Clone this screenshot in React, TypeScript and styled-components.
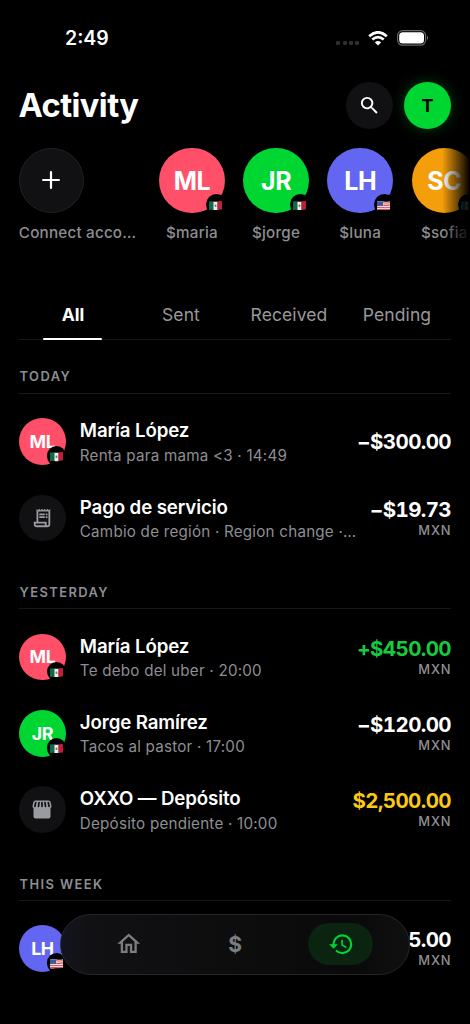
import React from "react";
import styled, { createGlobalStyle, css } from "styled-components";
import { MdSearch, MdOutlineReceiptLong, MdOutlineHome, MdHistory } from "react-icons/md";

const GlobalStyle = createGlobalStyle`
  *, *::before, *::after { box-sizing: border-box; }
  html, body { margin: 0; background: #000; }
  body { font-family: Inter, "Liberation Sans", sans-serif; color: #fff; overflow: hidden; }
`;

const Screen = styled.main`
  position: relative;
  width: 470px;
  height: 1024px;
  overflow: hidden;
  background: #000;
  display: flex;
  flex-direction: column;
`;

const StatusBar = styled.div`
  display: flex;
  justify-content: space-between;
  align-items: center;
  height: 76px;
  padding: 0 41px 0 65px;
`;

const Time = styled.span`
  font-size: 19.5px;
  font-weight: 600;
  line-height: 24px;
`;

const StatusIcons = styled.div`
  display: flex;
  align-items: center;
  gap: 9px;
`;

const SignalDots = styled.div`
  display: flex;
  gap: 2.2px;
  padding-top: 10px;
  span { width: 4px; height: 4px; border-radius: 1.2px; background: #303030; }
`;

const Header = styled.header`
  display: flex;
  align-items: center;
  height: 58.6px;
  padding: 0 19px;
  gap: 11.5px;
`;

const Title = styled.h1`
  flex: 1;
  margin: -1px 0 0 -0.6px;
  font-size: 32.7px;
  line-height: 40px;
  font-weight: 700;
  letter-spacing: -0.57px;
`;

const RoundButton = styled.button<{ $accent?: boolean }>`
  width: 46.8px;
  height: 46.8px;
  border: 0;
  padding: 0;
  border-radius: 50%;
  display: grid;
  place-items: center;
  color: #fff;
  background: #111113;
  font: 700 18px/22px Inter, sans-serif;
  ${(p) => p.$accent && css`
    padding-top: 1px;
    color: #000;
    background: #00d632;
    box-shadow: 0 0 14px rgba(0, 214, 50, 0.3);
  `}
`;

const Contacts = styled.section`
  position: relative;
  display: flex;
  height: 109.4px;
  padding: 13px 0 0 18.8px;
  overflow: hidden;
  &::after {
    content: "";
    position: absolute;
    inset: 0 0 0 auto;
    width: 28px;
    background: linear-gradient(90deg, transparent, #000);
  }
`;

const Contact = styled.div<{ $wide?: boolean }>`
  flex: none;
  width: ${(p) => (p.$wide ? "121px" : "66px")};
  margin-right: ${(p) => (p.$wide ? "19.2px" : "18.1px")};
  display: flex;
  flex-direction: column;
  align-items: ${(p) => (p.$wide ? "flex-start" : "center")};
`;

const ContactName = styled.span`
  margin-top: 10.2px;
  font-size: 15.2px;
  line-height: 20px;
  font-weight: 500;
  letter-spacing: 0.22px;
  color: #8e8e93;
  white-space: nowrap;
`;

const AddCircle = styled.div`
  width: 65.4px;
  height: 65.4px;
  border-radius: 50%;
  border: 1px solid #222224;
  background: #111113;
  display: grid;
  place-items: center;
`;

const AvatarCircle = styled.div<{ $size: number; $color: string }>`
  position: relative;
  flex: none;
  width: ${(p) => p.$size}px;
  height: ${(p) => p.$size}px;
  border-radius: 50%;
  display: grid;
  place-items: center;
  padding-top: ${(p) => (p.$size > 50 ? 1 : 0)}px;
  background: ${(p) => p.$color};
  color: ${(p) => (p.$color === "#111113" ? "#9a9aa2" : "#fff")};
  font-weight: 700;
  font-size: ${(p) => (p.$size > 50 ? 25 : 17.8)}px;
  letter-spacing: -0.4px;
`;

const FlagBadge = styled.span<{ $large: boolean }>`
  position: absolute;
  right: ${(p) => (p.$large ? -2.5 : -0.6)}px;
  bottom: ${(p) => (p.$large ? -2.5 : -1)}px;
  width: ${(p) => (p.$large ? 21.5 : 19.8)}px;
  height: ${(p) => (p.$large ? 21.5 : 19.8)}px;
  padding: 2px ${(p) => (p.$large ? 2 : 0)}px 0 0;
  border-radius: 50%;
  background: #000;
  display: grid;
  place-items: center;
`;

const Tabs = styled.nav`
  display: grid;
  grid-template-columns: repeat(4, 1fr);
  height: 51px;
  margin: 45px 19px 0;
  border-bottom: 1px solid #171718;
`;

const Tab = styled.span<{ $active?: boolean }>`
  position: relative;
  text-align: center;
  font-size: 17.5px;
  line-height: 51.5px;
  font-weight: ${(p) => (p.$active ? 700 : 400)};
  letter-spacing: ${(p) => (p.$active ? -0.1 : 0.1)}px;
  color: ${(p) => (p.$active ? "#fff" : "#98989d")};
  ${(p) => p.$active && css`
    &::after {
      content: "";
      position: absolute;
      left: 24px;
      right: 24.8px;
      bottom: 0;
      height: 2.6px;
      border-radius: 2px;
      background: #fff;
    }
  `}
`;

const Section = styled.section`
  padding: 25.5px 19px 0;
  & + & { padding-top: 24.8px; }
`;

const SectionTitle = styled.h2`
  margin: 0 0 9.8px;
  padding: 0 0 0 0.6px;
  height: 28.2px;
  font-size: 12.9px;
  line-height: 23px;
  font-weight: 600;
  letter-spacing: 1.42px;
  color: #8e8e93;
  border-bottom: 1px solid #171718;
`;

const Row = styled.div`
  display: flex;
  align-items: center;
  height: 76.3px;
  gap: 14px;
`;

const Details = styled.div`
  flex: 1;
  min-width: 0;
  padding-top: 2.8px;
  display: flex;
  flex-direction: column;
`;

const Name = styled.span`
  font-size: 18.7px;
  line-height: 24px;
  font-weight: 600;
  letter-spacing: -0.12px;
`;

const Note = styled.span`
  margin-top: 1.4px;
  font-size: 15.2px;
  line-height: 22px;
  letter-spacing: 0.22px;
  color: #8e8e93;
  white-space: nowrap;
`;

const AmountBox = styled.div`
  display: flex;
  flex-direction: column;
  align-items: flex-end;
  padding-top: 0.6px;
`;

const Amount = styled.span<{ $color?: string }>`
  font-size: 20.5px;
  line-height: 24px;
  font-weight: 700;
  font-variant-numeric: tabular-nums;
  letter-spacing: -0.6px;
  color: ${(p) => p.$color ?? "#fff"};
`;

const Currency = styled.span`
  font-size: 12.9px;
  line-height: 17px;
  font-weight: 500;
  letter-spacing: 0.9px;
  margin-right: -0.5px;
  color: #8e8e93;
`;

const BottomBar = styled.nav`
  position: absolute;
  left: 59.5px;
  top: 913.6px;
  width: 350.5px;
  height: 61px;
  border-radius: 31px;
  border: 1px solid #262628;
  padding: 0 15px 1px;
  display: grid;
  grid-template-columns: repeat(3, 1fr);
  align-items: center;
  justify-items: center;
  background: linear-gradient(90deg, #14141f 0, #111114 28px, #0d0d0e 50%, #0a0a0b 85%, #101011 100%);
`;

const BarItem = styled.span<{ $active?: boolean }>`
  width: 65px;
  height: 42px;
  padding: 1px 0 0 0.6px;
  border-radius: 21px;
  display: grid;
  place-items: center;
  font-size: 21px;
  font-weight: 700;
  color: ${(p) => (p.$active ? "#00d632" : "#7d7d7f")};
  background: ${(p) => (p.$active ? "#0a2411" : "transparent")};
`;

type Country = "mx" | "us";

const Flag = ({ country }: { country: Country }) =>
  country === "mx" ? (
    <svg width="13" height="9.4" viewBox="0 0 13 9.4">
      <path d="M0 .6Q2.2-.2 4.4.4V9Q2.2 8.600 0 9.400z" fill="#0b6b4b" />
      <path d="M4.400.400Q6.500 1 8.600.500V9Q6.500 9.500 4.400 9z" fill="#eee" />
      <path d="M8.600.500Q11-.2 13 .2V8.600Q11 8.300 8.600 9z" fill="#c01f3c" />
      <ellipse cx="6.500" cy="4.700" rx="1" ry="1.300" fill="#8a765a" />
    </svg>
  ) : (
    <svg width="13" height="9.4" viewBox="0 0 13 9.4">
      <path d="M0 .6Q3-.3 6.500.500T13 .2V8.700Q10 8.300 6.500 9T0 9.200z" fill="#eee" />
      <path d="M0 2Q3 1.200 6.500 1.800T13 1.500M0 4.400Q3 3.700 6.500 4.200T13 3.900M0 6.600Q3 6 6.500 6.500T13 6.200M0 8.700Q3 8.200 6.500 8.600T13 8.300" fill="none" stroke="#dc4a56" strokeWidth="1.100" />
      <path d="M0 .6Q3-.2 6 .4V5Q3 4.500 0 5.200z" fill="#3b5a9d" />
    </svg>
  );

const StoreIcon = () => (
  <svg width="20" height="19" viewBox="0 0 20 19">
    <path d="M3.200.5H16.800Q18.300.5 18.600 2L19.500 6Q19.700 7.600 18.500 8.300V16.500Q18.500 18.500 16.500 18.500H3.500Q1.500 18.500 1.500 16.500V8.300Q.3 7.600.5 6L1.400 2Q1.700.5 3.200.5Z" fill="currentColor" />
    <path d="M3.700 2.500L2.900 6.300M7 2.500L6.500 6.300M10 2.500V6.300M13 2.500L13.500 6.300M16.300 2.500L17.100 6.300" stroke="#111113" strokeWidth="1.700" strokeLinecap="round" />
  </svg>
);

const Avatar = ({ text, color, country, size = 46.8 }: { text: React.ReactNode; color: string; country?: Country; size?: number }) => (
  <AvatarCircle $size={size} $color={color}>
    {text}
    {country && (
      <FlagBadge $large={size > 50}>
        <Flag country={country} />
      </FlagBadge>
    )}
  </AvatarCircle>
);

type Item = {
  avatar: React.ReactNode;
  color: string;
  country?: Country;
  name: string;
  note: string;
  amount: string;
  tone?: string;
  currency?: string;
};

const PINK = "#ff4f69";
const GREEN = "#00d632";
const INDIGO = "#6366f1";
const ORANGE = "#f59e0b";
const NEUTRAL = "#111113";

const contacts: { initials: string; color: string; country: Country; handle: string }[] = [
  { initials: "ML", color: PINK, country: "mx", handle: "$maria" },
  { initials: "JR", color: GREEN, country: "mx", handle: "$jorge" },
  { initials: "LH", color: INDIGO, country: "us", handle: "$luna" },
  { initials: "SC", color: ORANGE, country: "mx", handle: "$sofia" },
];

const groups: { title: string; items: Item[] }[] = [
  {
    title: "TODAY",
    items: [
      { avatar: "ML", color: PINK, country: "mx", name: "María López", note: "Renta para mama <3 · 14:49", amount: "−$300.00" },
      { avatar: <MdOutlineReceiptLong size={22} />, color: NEUTRAL, name: "Pago de servicio", note: "Cambio de región · Region change ·…", amount: "−$19.73", currency: "MXN" },
    ],
  },
  {
    title: "YESTERDAY",
    items: [
      { avatar: "ML", color: PINK, country: "mx", name: "María López", note: "Te debo del uber · 20:00", amount: "+$450.00", tone: "#16cb40", currency: "MXN" },
      { avatar: "JR", color: GREEN, country: "mx", name: "Jorge Ramírez", note: "Tacos al pastor · 17:00", amount: "−$120.00", currency: "MXN" },
      { avatar: <StoreIcon />, color: NEUTRAL, name: "OXXO — Depósito", note: "Depósito pendiente · 10:00", amount: "$2,500.00", tone: "#fbc915", currency: "MXN" },
    ],
  },
  {
    title: "THIS WEEK",
    items: [{ avatar: "LH", color: INDIGO, country: "us", name: "", note: "", amount: "5.00", currency: "MXN" }],
  },
];

export default function App() {
  return (
    <Screen>
      <GlobalStyle />
      <StatusBar>
        <Time>2:49</Time>
        <StatusIcons>
          <SignalDots><span /><span /><span /><span /></SignalDots>
          <svg width="20" height="15" viewBox="0 0 20 15" fill="none" stroke="#fff" strokeWidth="2.700">
            <path d="M1.200 5.200Q10-2.600 18.800 5.200M4.300 8.600Q10 3.700 15.700 8.600" />
            <path d="M10 14.600L6.900 11.400Q10 8.700 13.100 11.400Z" fill="#fff" stroke="none" />
          </svg>
          <svg width="32" height="16" viewBox="0 0 32 16">
            <rect x=".6" y=".6" width="28" height="14.600" rx="5" fill="none" stroke="#666" strokeWidth="1.200" />
            <rect x="2.200" y="2.200" width="24.800" height="11.400" rx="3.600" fill="#fff" />
            <path d="M30 5.500Q32 7.900 30 10.300Z" fill="#777" />
          </svg>
        </StatusIcons>
      </StatusBar>
      <Header>
        <Title>Activity</Title>
        <RoundButton aria-label="Search"><MdSearch size={23} /></RoundButton>
        <RoundButton $accent>T</RoundButton>
      </Header>
      <Contacts>
        <Contact $wide>
          <AddCircle>
            <svg width="18" height="18" viewBox="0 0 18 18" stroke="#fff" strokeWidth="2.200" strokeLinecap="round">
              <path d="M9 1.100V16.900M1.100 9H16.900" />
            </svg>
          </AddCircle>
          <ContactName>Connect acco…</ContactName>
        </Contact>
        {contacts.map((c) => (
          <Contact key={c.handle}>
            <Avatar text={c.initials} color={c.color} country={c.country} size={65.4} />
            <ContactName>{c.handle}</ContactName>
          </Contact>
        ))}
      </Contacts>
      <Tabs>
        <Tab $active>All</Tab>
        <Tab>Sent</Tab>
        <Tab>Received</Tab>
        <Tab>Pending</Tab>
      </Tabs>
      {groups.map((g) => (
        <Section key={g.title}>
          <SectionTitle>{g.title}</SectionTitle>
          {g.items.map((item, i) => (
            <Row key={i}>
              <Avatar text={item.avatar} color={item.color} country={item.country} />
              <Details>
                <Name>{item.name}</Name>
                <Note>{item.note}</Note>
              </Details>
              <AmountBox>
                <Amount $color={item.tone}>{item.amount}</Amount>
                {item.currency && <Currency>{item.currency}</Currency>}
              </AmountBox>
            </Row>
          ))}
        </Section>
      ))}
      <BottomBar>
        <BarItem><MdOutlineHome size={27.5} /></BarItem>
        <BarItem>$</BarItem>
        <BarItem $active><MdHistory size={26.5} /></BarItem>
      </BottomBar>
    </Screen>
  );
}
